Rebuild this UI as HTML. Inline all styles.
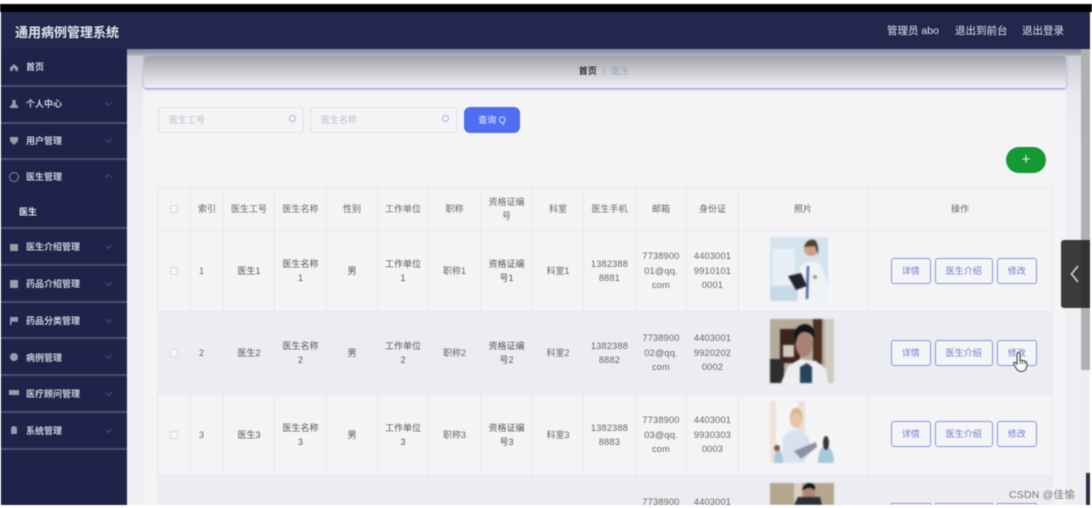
<!DOCTYPE html>
<html lang="zh">
<head>
<meta charset="utf-8">
<title>通用病例管理系统</title>
<style>
*{box-sizing:border-box;margin:0;padding:0}
html,body{width:1092px;height:508px;overflow:hidden;background:#fff}
body{font-family:"Liberation Sans","Noto Sans CJK SC",sans-serif;position:relative}
#wrap{position:absolute;left:0;top:0;width:1092px;height:508px;overflow:hidden;filter:blur(.55px)}
.a{position:absolute}
.black{left:0;top:4px;width:1092px;height:8px;background:#000}
.header{left:1px;top:12px;width:1089px;height:37px;background:#21274d;color:#e8e9ee}
.logo{left:14px;top:10px;font-size:13px;font-weight:bold;color:#e6e7ec;white-space:nowrap}
.hl{top:11px;font-size:10.5px;white-space:nowrap;color:#e2e3ea}
.main{left:127px;top:49px;width:954px;height:456px;background:linear-gradient(#c9c9d2,#e9e9ef 10%,#eeeef3 20%)}
.shade{left:127px;top:49px;width:963px;height:7px;background:linear-gradient(#868aa2,#a3a4b4 70%,rgba(180,180,190,.6))}
.content{left:143px;top:88px;width:923px;height:417px;background:#f4f4f6}
.crumb{left:144px;top:56px;width:922px;height:33px;border-radius:3px;background:linear-gradient(#a2a2ab,#cfcfd5 55%,#f0f0f3);box-shadow:0 0 2px 1px #b8bde8;border-bottom:1px solid #98a1e2;text-align:center;font-size:9px;line-height:31px;color:#333;padding-right:2px}
.crumb i{font-style:normal;color:#999;margin:0 6px}
.crumb b{font-weight:bold;color:#333}
.crumb span{color:#98a3c0}
.side{left:1px;top:49px;width:126px;height:456px;background:#1e2349}
.mi{left:1px;width:126px;height:2px;background:#4c5069}
.mt{left:26px;font-size:9px;font-weight:bold;color:#cfd1db;white-space:nowrap;line-height:12px}
.ic{left:10px;width:8px;height:8px;background:#9a9cab}
.ch{left:106px;width:5px;height:5px;border-right:1px solid #4f5373;border-bottom:1px solid #4f5373;transform:rotate(45deg)}
.inp{top:107px;height:26px;background:#f4f4f6;border:1px solid #dfdfe4;border-radius:3px;font-size:9px;color:#bcbdc6;line-height:24px;padding-left:10px}
.mag{top:115px;width:7px;height:7px;border:1px solid #aab1e2;border-radius:50%}
.q{left:464px;top:107px;width:56px;height:26px;border-radius:6px;background:#4f6ef0;color:#eef;font-size:9px;text-align:center;line-height:26px}
.add{left:1006px;top:147px;width:40px;height:26px;border-radius:13px;background:#149a33;color:#dff5e3;font-size:15px;text-align:center;line-height:25px}
table{position:absolute;left:157px;top:187px;width:895px;border-collapse:collapse;table-layout:fixed;font-size:9px;color:#666;text-align:center}
td,th{border:1px solid #e8e8ee;font-weight:normal;line-height:14.5px;padding:0;overflow:hidden}
th{height:43px;color:#666}
.r td{height:81px}
.r2 td{background:#ecedf2;height:83px}
.r3 td{height:81px}
.r4 td{background:#ecedf2;height:30px;vertical-align:top;padding-top:22px;line-height:8px}
.cb{display:inline-block;width:8px;height:8px;border:1px solid #d8d8de;background:#f7f7f8;vertical-align:middle}
.dk{color:#555}
.n{letter-spacing:.2px;font-size:9.2px}
.ix{text-align:left;padding-left:8px}
.btn{position:absolute;height:26px;border:1.3px solid #8795da;border-radius:3px;background:#f5f5f8;color:#6c7ccf;font-size:9px;text-align:center;line-height:24px}
.ph{position:absolute;left:770px;width:64px;height:64px;overflow:hidden;filter:blur(.7px)}
.sb{left:1081px;top:49px;width:9px;height:321px;background:#b0b0b2}
.sb2{left:1081px;top:370px;width:9px;height:135px;background:#eeeef2}
.tab{left:1061px;top:240px;width:29px;height:68px;background:#3b3b3b;border-radius:3px 0 0 3px}
.tab2{left:1081px;top:240px;width:9px;height:68px;background:#333}
.wm{left:1009px;top:487px;font-size:10.5px;color:#77777a;white-space:nowrap;letter-spacing:.2px;z-index:6}
.dark{left:1086px;top:473px;width:4px;height:32px;background:#2a2f48}
.cover{left:0;top:505px;width:1092px;height:3px;background:#fff;z-index:5}
</style>
</head>
<body>
<div id="wrap">
<div class="a main"></div>
<div class="a content"></div>
<div class="a black"></div>

<div class="a crumb"><b>首页</b><i>/</i><span>医生</span></div>
<div class="a shade"></div>

<div class="a header">
  <div class="a logo">通用病例管理系统</div>
  <div class="a hl" style="left:886px">管理员 abo</div>
  <div class="a hl" style="left:954px">退出到前台</div>
  <div class="a hl" style="left:1021px">退出登录</div>
</div>

<div class="a side"></div>
<div class="a mi" style="top:85px"></div>
<div class="a mi" style="top:122px"></div>
<div class="a mi" style="top:158px"></div>
<div class="a mi" style="top:227px"></div>
<div class="a mi" style="top:264px"></div>
<div class="a mi" style="top:301px"></div>
<div class="a mi" style="top:337px"></div>
<div class="a mi" style="top:374px"></div>
<div class="a mi" style="top:411px"></div>
<div class="a mi" style="top:448px"></div>

<div class="a ic" style="top:64px;height:7px;clip-path:polygon(50% 0,100% 50%,100% 100%,65% 100%,65% 65%,35% 65%,35% 100%,0 100%,0 50%)"></div>
<div class="a mt" style="top:61px">首页</div>
<div class="a ic" style="top:100px;clip-path:polygon(30% 0,70% 0,70% 50%,100% 80%,100% 100%,0 100%,0 80%,30% 50%)"></div>
<div class="a mt" style="top:98px">个人中心</div><div class="a ch" style="top:100px"></div>
<div class="a ic" style="top:137px;clip-path:polygon(0 0,100% 0,100% 50%,50% 100%,0 50%)"></div>
<div class="a mt" style="top:135px">用户管理</div><div class="a ch" style="top:137px"></div>
<div class="a ic" style="top:172px;background:none;border:1px solid #8a8c9e;border-radius:50%;width:10px;height:10px;left:9px"></div>
<div class="a mt" style="top:171px">医生管理</div><div class="a ch" style="top:175px;transform:rotate(225deg)"></div>
<div class="a mt" style="top:206px;left:19px;color:#e8e9ef">医生</div>
<div class="a ic" style="top:244px;height:7px"></div>
<div class="a mt" style="top:241px">医生介绍管理</div><div class="a ch" style="top:243px"></div>
<div class="a ic" style="top:280px"></div>
<div class="a mt" style="top:278px">药品介绍管理</div><div class="a ch" style="top:280px"></div>
<div class="a ic" style="top:317px;clip-path:polygon(0 0,100% 0,100% 60%,20% 60%,20% 100%,0 100%)"></div>
<div class="a mt" style="top:315px">药品分类管理</div><div class="a ch" style="top:317px"></div>
<div class="a ic" style="top:353px;border-radius:50% 50% 50% 50%"></div>
<div class="a mt" style="top:352px">病例管理</div><div class="a ch" style="top:353px"></div>
<div class="a ic" style="top:390px;height:5px;width:10px;left:9px"></div>
<div class="a mt" style="top:388px">医疗顾问管理</div><div class="a ch" style="top:390px"></div>
<div class="a ic" style="top:426px;width:6px;left:11px;border-radius:3px 3px 1px 1px"></div>
<div class="a mt" style="top:425px">系统管理</div><div class="a ch" style="top:427px"></div>

<div class="a inp" style="left:158px;width:146px">医生工号</div>
<div class="a mag" style="left:289px"></div>
<div class="a inp" style="left:310px;width:147px">医生名称</div>
<div class="a mag" style="left:442px"></div>
<div class="a q">查询 Q</div>
<div class="a add">+</div>

<table>
<colgroup>
<col style="width:33px"><col style="width:33px"><col style="width:51px"><col style="width:52px"><col style="width:51px"><col style="width:51px"><col style="width:52px"><col style="width:52px"><col style="width:51px"><col style="width:52px"><col style="width:51px"><col style="width:52px"><col style="width:129px"><col style="width:185px">
</colgroup>
<tr><th><span class="cb"></span></th><th>索引</th><th>医生工号</th><th>医生名称</th><th>性别</th><th>工作单位</th><th>职称</th><th>资格证编<br>号</th><th>科室</th><th>医生手机</th><th>邮箱</th><th>身份证</th><th>照片</th><th>操作</th></tr>
<tr class="r"><td><span class="cb"></span></td><td class="ix">1</td><td class="dk">医生1</td><td class="dk">医生名称<br>1</td><td class="dk">男</td><td class="dk">工作单位<br>1</td><td>职称1</td><td class="dk">资格证编<br>号1</td><td>科室1</td><td class="n">1382388<br>8881</td><td class="n">7738900<br>01@qq.<br>com</td><td class="n">4403001<br>9910101<br>0001</td><td></td><td></td></tr>
<tr class="r r2"><td><span class="cb"></span></td><td class="ix">2</td><td class="dk">医生2</td><td class="dk">医生名称<br>2</td><td class="dk">男</td><td class="dk">工作单位<br>2</td><td>职称2</td><td class="dk">资格证编<br>号2</td><td>科室2</td><td class="n">1382388<br>8882</td><td class="n">7738900<br>02@qq.<br>com</td><td class="n">4403001<br>9920202<br>0002</td><td></td><td></td></tr>
<tr class="r r3"><td><span class="cb"></span></td><td class="ix">3</td><td class="dk">医生3</td><td class="dk">医生名称<br>3</td><td class="dk">男</td><td class="dk">工作单位<br>3</td><td>职称3</td><td class="dk">资格证编<br>号3</td><td>科室3</td><td class="n">1382388<br>8883</td><td class="n">7738900<br>03@qq.<br>com</td><td class="n">4403001<br>9930303<br>0003</td><td></td><td></td></tr>
<tr class="r4"><td></td><td></td><td></td><td></td><td></td><td></td><td></td><td></td><td></td><td></td><td class="n">7738900</td><td class="n">4403001</td><td></td><td></td></tr>
</table>

<svg class="ph" style="top:237px" viewBox="0 0 64 64">
<rect width="64" height="64" fill="#d5e3ee"/><rect x="3" y="12" width="22" height="36" fill="#e8f0f6"/><rect x="58" width="6" height="64" fill="#f4f6f8"/><rect x="0" y="50" width="30" height="14" fill="#c6d9e8"/>
<path d="M27 64 L30 30 Q38 22 48 26 Q56 32 60 64 Z" fill="#f0f3f6"/><circle cx="41" cy="12" r="7" fill="#cda088"/><path d="M34 10 Q37 1 45 3 Q49 7 48 18 L45 9 Z" fill="#54402f"/>
<path d="M18 39 L31 36 L37 49 L26 53 Z" fill="#22242a"/><path d="M38 29 L37 62" stroke="#4a64a8" stroke-width="2.5"/><circle cx="45" cy="40" r="2" fill="#b39a50"/>
</svg>
<svg class="ph" style="top:319px" viewBox="0 0 64 64">
<rect width="64" height="64" fill="#b5ab98"/><rect x="10" y="10" width="20" height="34" fill="#3a241d"/><rect x="43" width="9" height="45" fill="#4e3023"/><rect x="55" width="9" height="64" fill="#cfcbc2"/><rect y="40" width="14" height="24" fill="#2e2c2c"/><rect x="13" y="26" width="11" height="12" fill="#d0cabd"/>
<path d="M11 64 L18 47 L30 40 L46 42 L56 50 L58 64 Z" fill="#eceef0"/><path d="M30 64 L30 48 L37 44 L42 48 L42 64 Z" fill="#25445f"/><ellipse cx="34" cy="25" rx="8.5" ry="13" fill="#a88272"/><path d="M24 20 Q24 5 36 5 Q46 7 44 20 Q40 12 33 13 Q27 14 26 24 Z" fill="#12151d"/>
</svg>
<svg class="ph" style="top:401px" viewBox="0 0 64 64">
<rect width="64" height="64" fill="#f6f5f5"/><rect width="6" height="62" fill="#eee2d8"/><rect x="28" width="7" height="45" fill="#eadfd6"/>
<path d="M12 62 L13 36 Q18 30 24 29 Q34 30 38 36 L42 46 L34 62 Z" fill="#d8e2ec"/><ellipse cx="26" cy="18" rx="6.5" ry="9" fill="#e9c4a6"/><path d="M20 15 Q22 6 27 7 Q33 9 32 17 Q29 11 24 12 Z" fill="#d6b684"/>
<path d="M24 50 L46 41 L47 46 L31 58 Z" fill="#8c92a4"/><path d="M48 62 Q48 46 56 44 Q64 48 64 62 Z" fill="#a8c8dc"/><ellipse cx="56" cy="42" rx="3" ry="7" fill="#37343a"/><path d="M4 62 Q4 50 8 48 Q13 50 13 62 Z" fill="#a8c8dc"/><circle cx="7" cy="47" r="3" fill="#7a5845"/>
</svg>
<svg class="ph" style="top:483px;height:22px" viewBox="0 0 64 22" preserveAspectRatio="none">
<rect width="64" height="22" fill="#b5a68e"/><rect x="24" width="8" height="22" fill="#d8d0c4"/><ellipse cx="39" cy="9" rx="6" ry="9" fill="#ad8670"/><path d="M32 7 Q34 0 40 0 Q46 1 45 7 Q40 3 35 6 Z" fill="#15151b"/><path d="M24 22 L28 14 L50 14 L52 22 Z" fill="#2c2e38"/>
</svg>

<div class="btn" style="left:891px;top:258px;width:39.5px">详情</div>
<div class="btn" style="left:935px;top:258px;width:57.5px">医生介绍</div>
<div class="btn" style="left:997px;top:258px;width:39.5px">修改</div>
<div class="btn" style="left:891px;top:339.5px;width:39.5px">详情</div>
<div class="btn" style="left:935px;top:339.5px;width:57.5px">医生介绍</div>
<div class="btn" style="left:997px;top:339.5px;width:39.5px">修改</div>
<div class="btn" style="left:891px;top:421px;width:39.5px">详情</div>
<div class="btn" style="left:935px;top:421px;width:57.5px">医生介绍</div>
<div class="btn" style="left:997px;top:421px;width:39.5px">修改</div>
<div class="btn" style="left:891px;top:503px;width:39.5px;height:2px;border-bottom:0"></div>
<div class="btn" style="left:935px;top:503px;width:57.5px;height:2px;border-bottom:0"></div>
<div class="btn" style="left:997px;top:503px;width:39.5px;height:2px;border-bottom:0"></div>

<svg class="a" style="left:1012px;top:351px;z-index:4" width="18" height="22" viewBox="0 0 18 22">
<path d="M5 2.5 Q6.5 1 8 2.5 L8 9 L13 10 Q15.5 11 15 14 L14 18 Q12 21 8.5 20.5 Q5.5 20 4 17 L1.5 12.5 Q1.5 11 3.5 11.5 L5 13 Z" fill="#f7f7f7" stroke="#4a4a4a" stroke-width="1.1"/>
<path d="M8 9 V13 M10.5 10 V13 M13 10.5 V13" stroke="#4a4a4a" stroke-width=".8" fill="none"/>
</svg>

<div class="a sb"></div>
<div class="a sb2"></div>
<div class="a tab"></div>
<div class="a tab2"></div>
<svg class="a" style="left:1070px;top:264px" width="10" height="20" viewBox="0 0 10 20"><path d="M8 2 L1.5 10 L8 18" fill="none" stroke="#d4d4d4" stroke-width="1.6"/></svg>
<div class="a dark"></div>
<div class="a wm">CSDN @佳愉</div>
<div class="a cover"></div>
</div>
</body>
</html>
